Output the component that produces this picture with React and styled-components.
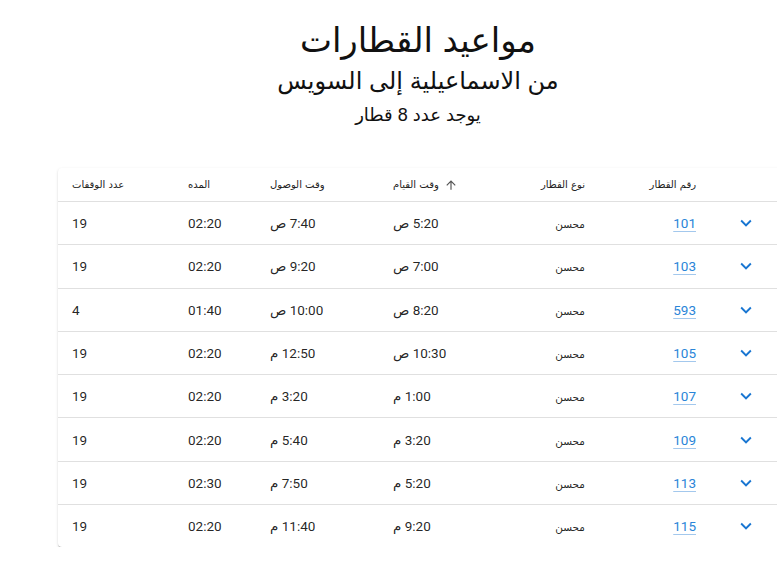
import React from "react";
import styled, { createGlobalStyle } from "styled-components";

const trains = [
  { no: "101", type: "محسن", dep: "5:20 ص", arr: "7:40 ص", dur: "02:20", stops: 19 },
  { no: "103", type: "محسن", dep: "7:00 ص", arr: "9:20 ص", dur: "02:20", stops: 19 },
  { no: "593", type: "محسن", dep: "8:20 ص", arr: "10:00 ص", dur: "01:40", stops: 4 },
  { no: "105", type: "محسن", dep: "10:30 ص", arr: "12:50 م", dur: "02:20", stops: 19 },
  { no: "107", type: "محسن", dep: "1:00 م", arr: "3:20 م", dur: "02:20", stops: 19 },
  { no: "109", type: "محسن", dep: "3:20 م", arr: "5:40 م", dur: "02:20", stops: 19 },
  { no: "113", type: "محسن", dep: "5:20 م", arr: "7:50 م", dur: "02:30", stops: 19 },
  { no: "115", type: "محسن", dep: "9:20 م", arr: "11:40 م", dur: "02:20", stops: 19 },
];

// column widths, left to right
const columns = [116, 82, 123, 111, 109, 111, 126];

const ChevronDown = () => (
  <svg width="22" height="22" viewBox="0 0 24 24" fill="currentColor">
    <path d="M7.41 8.59 12 13.17l4.59-4.58L18 10l-6 6-6-6 1.41-1.41z" />
  </svg>
);

const ArrowUp = () => (
  <svg width="14" height="14" viewBox="0 0 24 24" fill="currentColor">
    <path d="m4 12 1.41 1.41L11 7.83V20h2V7.83l5.58 5.59L20 12l-8-8-8 8z" />
  </svg>
);

const App = () => {
  return (
    <>
      <GlobalStyle />
      <Page>
        <Header>
          <Title>مواعيد القطارات</Title>
          <Subtitle>من الاسماعيلية إلى السويس</Subtitle>
          <Count>يوجد عدد 8 قطار</Count>
        </Header>
        <Card>
          <Table>
            <colgroup>
              {columns.map((w, i) => (
                <Col key={i} $w={w} />
              ))}
            </colgroup>
            <thead>
              <tr>
                <HeadCell>عدد الوقفات</HeadCell>
                <HeadCell>المده</HeadCell>
                <HeadCell>وقت الوصول</HeadCell>
                <HeadCell>
                  <SortLabel>
                    <span dir="rtl">وقت القيام</span>
                    <ArrowUp />
                  </SortLabel>
                </HeadCell>
                <HeadCell $align="right">نوع القطار</HeadCell>
                <HeadCell $align="right">رقم القطار</HeadCell>
                <HeadCell />
              </tr>
            </thead>
            <tbody>
              {trains.map((t) => (
                <tr key={t.no}>
                  <Cell>{t.stops}</Cell>
                  <Cell>{t.dur}</Cell>
                  <Cell>
                    <Time dir="rtl">{t.arr}</Time>
                  </Cell>
                  <Cell>
                    <Time dir="rtl">{t.dep}</Time>
                  </Cell>
                  <Cell $align="right">
                    <Small dir="rtl">{t.type}</Small>
                  </Cell>
                  <Cell $align="right">
                    <TrainLink href="#">{t.no}</TrainLink>
                  </Cell>
                  <ExpandCell>
                    <ExpandButton>
                      <ChevronDown />
                    </ExpandButton>
                  </ExpandCell>
                </tr>
              ))}
            </tbody>
          </Table>
        </Card>
      </Page>
    </>
  );
};

export default App;

const GlobalStyle = createGlobalStyle`
  html, body {
    margin: 0;
    padding: 0;
    overflow: hidden;
    background: #fff;
  }
  body {
    font-family: Roboto, "DejaVu Sans", sans-serif;
    color: rgba(0, 0, 0, 0.87);
  }
`;

const Page = styled.div`
  width: 836px;
  padding-top: 18px;
`;

const Header = styled.div`
  direction: rtl;
  text-align: center;
  font-family: "Liberation Sans", "DejaVu Sans", sans-serif;
  color: #111;
`;

const Title = styled.h1`
  margin: 0;
  font-size: 34px;
  font-weight: 400;
  line-height: 44px;
`;

const Subtitle = styled.h2`
  margin: 0;
  font-size: 24px;
  font-weight: 400;
  line-height: 38px;
`;

const Count = styled.h3`
  margin: 0;
  font-size: 18px;
  font-weight: 400;
  line-height: 30px;
`;

const Card = styled.div`
  margin: 38px 0 0 58px;
  width: 778px;
  background: #fff;
  border-radius: 4px;
  box-shadow: 0px 2px 1px -1px rgba(0, 0, 0, 0.2),
    0px 1px 1px 0px rgba(0, 0, 0, 0.14), 0px 1px 3px 0px rgba(0, 0, 0, 0.12);
  overflow: hidden;
`;

const Table = styled.table`
  width: 100%;
  table-layout: fixed;
  border-collapse: collapse;
`;

const Col = styled.col`
  width: ${(p) => p.$w}px;
`;

const HeadCell = styled.th`
  height: 33px;
  padding: 0 14px;
  text-align: ${(p) => p.$align || "left"};
  font-family: "DejaVu Sans", sans-serif;
  font-size: 10px;
  font-weight: 400;
  color: #222;
  border-bottom: 1px solid rgb(224, 224, 224);
  direction: rtl;
  white-space: nowrap;
`;

const SortLabel = styled.span`
  display: inline-flex;
  align-items: center;
  gap: 5px;
  direction: ltr;
  color: #222;

  svg {
    color: #555;
  }
`;

const Cell = styled.td`
  height: 42.3px;
  padding: 0 14px;
  text-align: ${(p) => p.$align || "left"};
  font-size: 13.5px;
  color: rgba(0, 0, 0, 0.87);
  border-bottom: 1px solid rgb(224, 224, 224);
  vertical-align: middle;
  white-space: nowrap;

  tr:last-child & {
    border-bottom: none;
  }
`;

const Time = styled.span`
  display: inline-block;
`;

const Small = styled.span`
  font-family: "DejaVu Sans", sans-serif;
  font-size: 10.5px;
`;

const TrainLink = styled.a`
  color: #2a85d8;
  text-decoration: underline;
  text-decoration-color: rgba(25, 118, 210, 0.4);
  text-underline-offset: 3px;
  font-size: 13.5px;
`;

const ExpandCell = styled(Cell)`
  padding-left: 25px;
`;

const ExpandButton = styled.span`
  display: inline-flex;
  vertical-align: middle;
  color: #1976d2;
`;
